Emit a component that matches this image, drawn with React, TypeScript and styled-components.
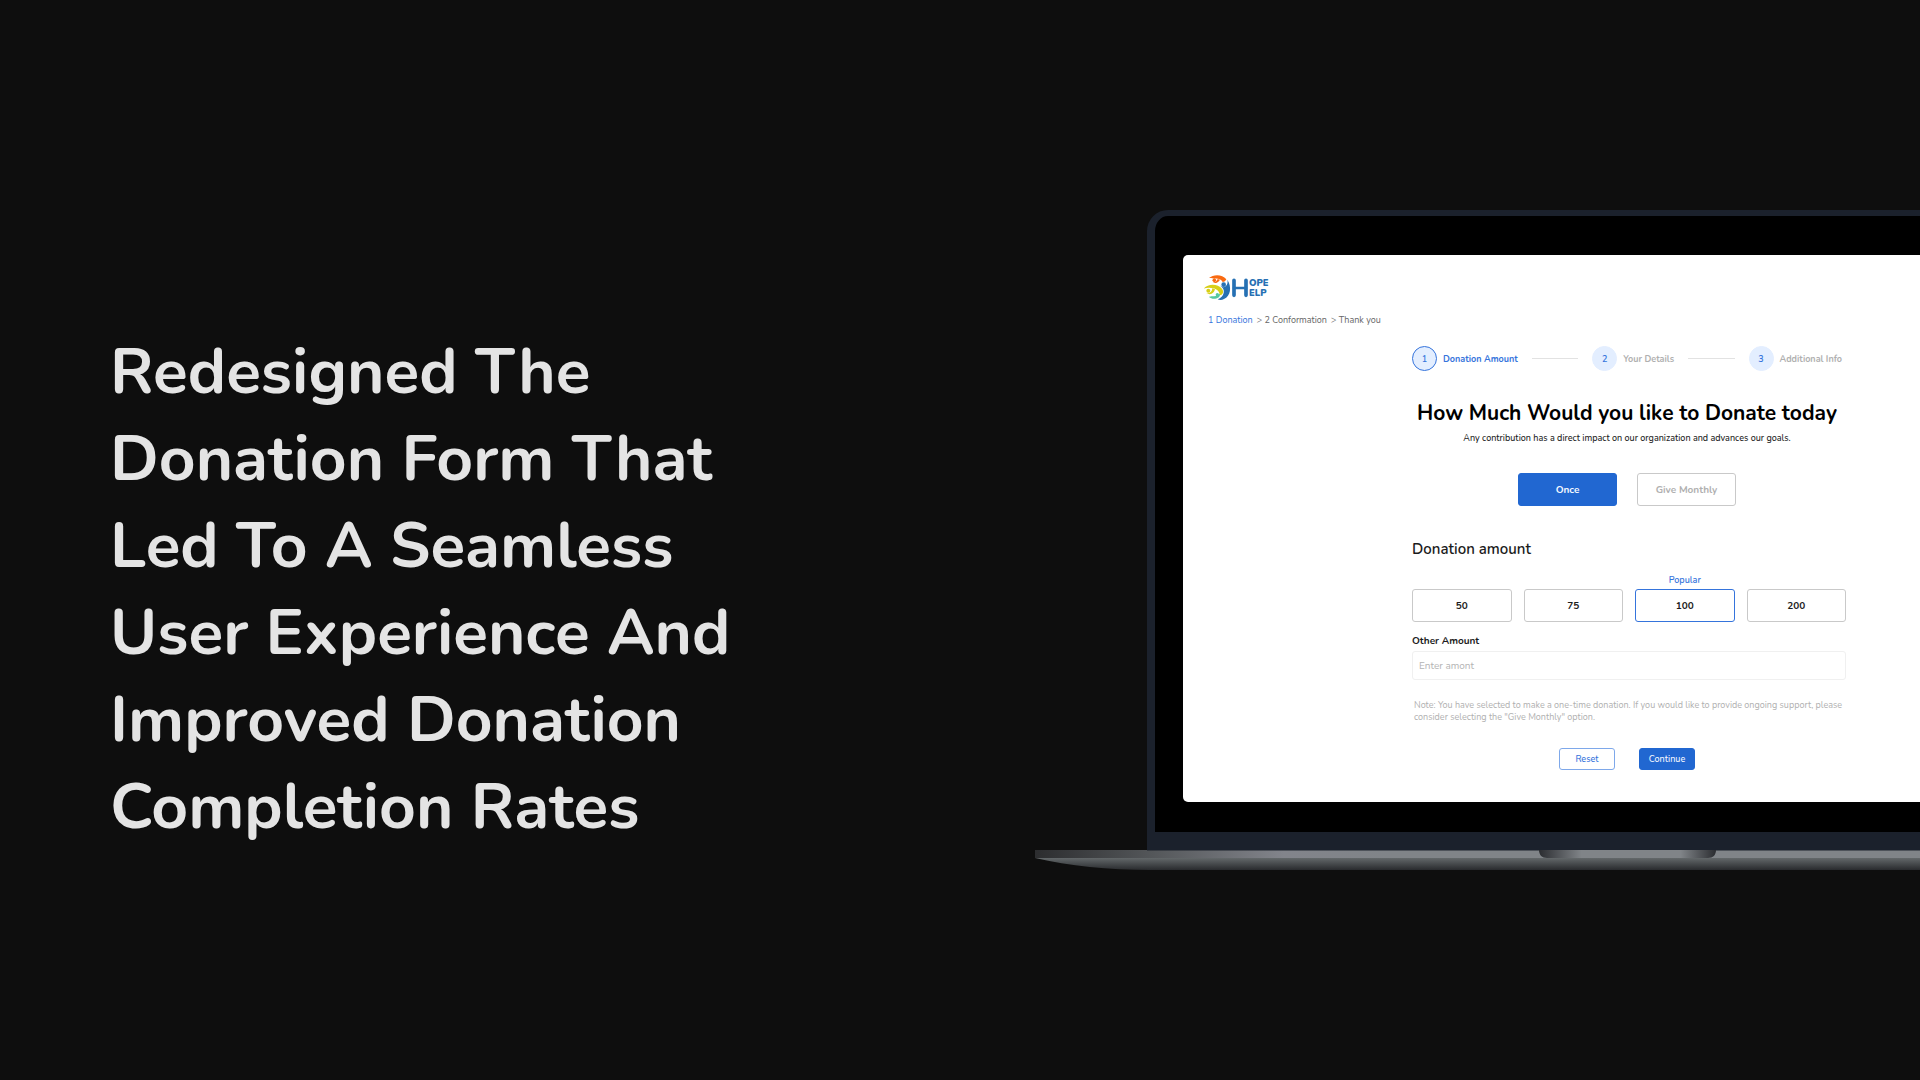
import React, { useState } from "react";
import styled, { createGlobalStyle, css } from "styled-components";

const color = {
  page: "#0e0e0e",
  headline: "#e4e4e4",
  lid: "#1b212c",
  blue: "#2167d1",
  link: "#3574dc",
  pale: "#e3eeff",
  line: "#e2e2e2",
  border: "#c9c9c9",
  muted: "#b0b0b0",
  ink: "#1c1c1c",
};

const GlobalStyle = createGlobalStyle`
  *, *::before, *::after { box-sizing: border-box; }
  body {
    margin: 0;
    background: ${color.page};
    font-family: Nunito, Lato, "Open Sans", sans-serif;
  }
  h1, h2, h3, p, ol { margin: 0; padding: 0; }
  ol { list-style: none; }
  button, input { font: inherit; }
`;

const Page = styled.main`
  min-height: 100vh;
  display: grid;
  grid-template-columns: 69fr 59fr;
  align-content: center;
  align-items: start;
  overflow: hidden;
`;

const Copy = styled.section`
  min-width: 0;
  padding: 119px 24px 0 110px;
`;

const Headline = styled.h1`
  max-width: 650px;
  color: ${color.headline};
  font-size: 64px;
  font-weight: 700;
  line-height: 87px;
`;

const Showcase = styled.section`
  min-width: 0;
`;

const Laptop = styled.div`
  width: 1184px;
  display: flex;
  flex-direction: column;
  align-items: center;
`;

const Lid = styled.div`
  width: 960px;
  padding: 39px 28px 30px;
  background: #000;
  border: solid ${color.lid};
  border-width: 6px 8px 18px;
  border-radius: 21px 21px 0 0;
`;

const Base = styled.svg`
  display: block;
  width: 100%;
  height: 20px;
`;

const Screen = styled.div`
  display: flex;
  flex-direction: column;
  padding: 20px 21px 32px;
  background: #fff;
  border-radius: 5px;
`;

const LogoMark = styled.svg`
  display: block;
  width: 66px;
  height: 26px;
`;

const Crumbs = styled.nav`
  display: flex;
  gap: 4px;
  margin-top: 13px;
  padding-left: 4px;
  color: #666;
  font-size: 9px;
  line-height: 12px;
`;

const Crumb = styled.a<{ $current?: boolean }>`
  color: ${(p) => (p.$current ? color.link : "inherit")};
  text-decoration: none;
`;

const Form = styled.form`
  width: 438px;
  margin: 20px auto 0;
  padding-left: 4px;
`;

const Centered = styled.div`
  display: flex;
  flex-direction: column;
  align-items: center;
  padding-right: 4px;
`;

const Stepper = styled.ol`
  align-self: stretch;
  display: flex;
  align-items: center;
`;

const Step = styled.li<{ $active?: boolean }>`
  display: flex;
  align-items: center;
  gap: 6px;
  color: ${(p) => (p.$active ? color.link : color.muted)};
  font-size: 9px;
  font-weight: 700;
  line-height: 12px;
  white-space: nowrap;
`;

const StepNumber = styled.span<{ $active?: boolean }>`
  width: 25px;
  height: 25px;
  display: grid;
  place-items: center;
  border: 1px solid ${(p) => (p.$active ? color.link : color.pale)};
  border-radius: 50%;
  background: ${color.pale};
  color: ${color.link};
  font-weight: 600;
`;

const StepLine = styled.li`
  flex: 1;
  height: 1px;
  margin: 0 14px;
  background: ${color.line};
`;

const Title = styled.h2`
  margin-top: 28px;
  color: #000;
  font-size: 21px;
  font-weight: 700;
  line-height: 28px;
  white-space: nowrap;
`;

const Subtitle = styled.p`
  margin-top: 5px;
  color: ${color.ink};
  font-size: 9px;
  font-weight: 500;
  line-height: 12px;
`;

const ButtonRow = styled.div<{ $gap: number; $top: number }>`
  display: flex;
  gap: ${(p) => p.$gap}px;
  margin-top: ${(p) => p.$top}px;
`;

const filled = css`
  border-color: ${color.blue};
  background: ${color.blue};
  color: #f4f8ff;
`;

const BaseButton = styled.button`
  padding: 0;
  border: 1px solid ${color.border};
  border-radius: 3px;
  background: #fff;
  line-height: 12px;
  text-align: center;
  cursor: pointer;
`;

const FrequencyButton = styled(BaseButton)<{ $selected: boolean }>`
  width: 99px;
  height: 33px;
  color: ${color.muted};
  font-size: 10px;
  font-weight: 700;
  ${(p) => p.$selected && filled}
`;

const ActionButton = styled(BaseButton)<{ $primary?: boolean }>`
  width: 56px;
  height: 22px;
  border-color: #7ea8ea;
  color: ${color.link};
  font-size: 9px;
  font-weight: 500;
  ${(p) => p.$primary && filled}
`;

const SectionTitle = styled.h3`
  margin-top: 33px;
  color: ${color.ink};
  font-size: 15px;
  font-weight: 600;
  line-height: 20px;
`;

const Amounts = styled.div`
  display: grid;
  grid-template-columns: repeat(4, 1fr);
  gap: 12px;
  align-items: end;
  margin-top: 15px;
`;

const Amount = styled.div`
  display: flex;
  flex-direction: column;
  gap: 3px;
`;

const Tag = styled.span`
  color: ${color.link};
  font-size: 9px;
  font-weight: 600;
  line-height: 12px;
  text-align: center;
`;

const AmountButton = styled(BaseButton)<{ $selected: boolean }>`
  height: 33px;
  border-color: ${(p) => (p.$selected ? color.link : color.border)};
  color: ${color.ink};
  font-size: 10px;
  font-weight: 700;
`;

const FieldLabel = styled.label`
  display: block;
  margin-top: 13px;
  color: ${color.ink};
  font-size: 10px;
  font-weight: 700;
  line-height: 12px;
`;

const TextField = styled.input`
  display: block;
  width: 100%;
  height: 29px;
  margin-top: 4px;
  padding: 0 6px;
  border: 1px solid #f0f0f0;
  border-radius: 3px;
  color: ${color.ink};
  font-size: 10px;
  line-height: 12px;

  &::placeholder {
    color: #b4b4b4;
    opacity: 1;
  }
`;

const Note = styled.p`
  margin-top: 19px;
  padding-left: 2px;
  color: ${color.muted};
  font-size: 9px;
  line-height: 12px;
`;

function Logo() {
  return (
    <LogoMark viewBox="222 225 198 78" role="img" aria-label="Hope Help">
      <path fill="#f96a11" d="M237 234C249 223 276 221 289 238C287 243 283 246 278 246C273 237 263 235 254 236C248 236 243 233 237 234Z" />
      <circle fill="#f96a11" cx="253" cy="241" r="5.5" />
      <path fill="#f96a11" d="M246 247C254 249 260 245 263 237L270 239C264 248 256 252 246 247Z" />
      <path fill="#d8cf16" d="M221 266C233 250 263 250 276 266C282 274 280 284 269 286C270 274 258 264 243 264C235 262 229 263 221 266Z" />
      <circle fill="#d8cf16" cx="235" cy="272" r="6" />
      <path fill="#d8cf16" d="M229 279C241 281 246 275 247 265L255 268C252 280 241 287 229 279Z" />
      <path fill="#56c8a0" d="M237 291C247 285 251 294 270 281C273 295 249 302 237 291Z" />
      <circle fill="#56c8a0" cx="262" cy="284" r="5" />
      <circle fill="#2670b3" cx="281" cy="254" r="7" />
      <path fill="#2670b3" d="M292 239C306 260 302 288 282 297C275 301 268 300 263 298C278 291 283 282 281 270C280 264 274 262 270 256C276 262 283 263 287 259C292 254 294 248 292 239Z" />
      <g fill="none" stroke="#2670b3" strokeWidth="11" strokeLinecap="round">
        <path d="M312 241V286M348 241V286" />
        <path strokeWidth="8" d="M312 264H348" />
      </g>
      <g fill="#2670b3" fontSize="28" fontWeight="900">
        <text x="357" y="259">OPE</text>
        <text x="357" y="287">ELP</text>
      </g>
    </LogoMark>
  );
}

function LaptopBase() {
  return (
    <Base viewBox="0 0 1184 20" preserveAspectRatio="none" aria-hidden="true">
      <defs>
        <linearGradient id="deck">
          <stop offset="0" stopColor="#2c2d2f" />
          <stop offset="0.1" stopColor="#54575a" />
          <stop offset="0.21" stopColor="#82848b" />
          <stop offset="0.3" stopColor="#808488" />
          <stop offset="0.79" stopColor="#808488" />
          <stop offset="1" stopColor="#2c2d2f" />
        </linearGradient>
        <linearGradient id="front" x2="0" y2="1">
          <stop offset="0" stopColor="#63686a" />
          <stop offset="1" stopColor="#292b2e" />
        </linearGradient>
        <linearGradient id="notch">
          <stop offset="0" stopColor="#2b2d31" />
          <stop offset="0.24" stopColor="#808488" />
          <stop offset="0.8" stopColor="#808488" />
          <stop offset="1" stopColor="#2b2d31" />
        </linearGradient>
      </defs>
      <path fill="url(#deck)" d="M0 0H1184V8H0Z" />
      <path fill={color.lid} fillOpacity="0.5" d="M112 0H1072V1H112Z" />
      <path fill="url(#front)" d="M0 8H1184C1150 16 1110 20 1070 20H114C74 20 34 16 0 8Z" />
      <path fill="url(#notch)" d="M504 0H681C681 5 678 8 673 8H512C507 8 504 5 504 0Z" />
    </Base>
  );
}

const steps = ["Donation Amount", "Your Details", "Additional Info"];
const frequencies = ["Once", "Give Monthly"];
const amounts = [50, 75, 100, 200];

function DonationForm() {
  const [frequency, setFrequency] = useState("Once");
  const [amount, setAmount] = useState(100);

  return (
    <Form onSubmit={(e) => e.preventDefault()}>
      <Centered>
        <Stepper>
          {steps.map((label, i) => (
            <React.Fragment key={label}>
              {i > 0 && <StepLine aria-hidden="true" />}
              <Step $active={i === 0}>
                <StepNumber $active={i === 0}>{i + 1}</StepNumber>
                {label}
              </Step>
            </React.Fragment>
          ))}
        </Stepper>
        <Title>How Much Would you like to Donate today</Title>
        <Subtitle>Any contribution has a direct impact on our organization and advances our goals.</Subtitle>
        <ButtonRow $gap={20} $top={29}>
          {frequencies.map((name) => (
            <FrequencyButton
              key={name}
              type="button"
              $selected={frequency === name}
              aria-pressed={frequency === name}
              onClick={() => setFrequency(name)}
            >
              {name}
            </FrequencyButton>
          ))}
        </ButtonRow>
      </Centered>

      <SectionTitle>Donation amount</SectionTitle>
      <Amounts>
        {amounts.map((value) => (
          <Amount key={value}>
            {value === 100 && <Tag>Popular</Tag>}
            <AmountButton
              type="button"
              $selected={amount === value}
              aria-pressed={amount === value}
              onClick={() => setAmount(value)}
            >
              {value}
            </AmountButton>
          </Amount>
        ))}
      </Amounts>
      <FieldLabel htmlFor="other-amount">Other Amount</FieldLabel>
      <TextField id="other-amount" type="text" inputMode="decimal" placeholder="Enter amont" />
      <Note>
        Note: You have selected to make a one-time donation. If you would like to provide ongoing support, please
        consider selecting the "Give Monthly" option.
      </Note>

      <Centered>
        <ButtonRow $gap={24} $top={25}>
          <ActionButton type="reset">Reset</ActionButton>
          <ActionButton type="submit" $primary>
            Continue
          </ActionButton>
        </ButtonRow>
      </Centered>
    </Form>
  );
}

export default function App() {
  return (
    <>
      <GlobalStyle />
      <Page>
        <Copy>
          <Headline>Redesigned The Donation Form That Led To A Seamless User Experience And Improved Donation Completion Rates</Headline>
        </Copy>
        <Showcase>
          <Laptop>
            <Lid>
              <Screen>
                <Logo />
                <Crumbs aria-label="Progress">
                  <Crumb href="#donation" $current>
                    1 Donation
                  </Crumb>
                  <Crumb href="#conformation">&gt; 2 Conformation</Crumb>
                  <Crumb href="#thank-you">&gt; Thank you</Crumb>
                </Crumbs>
                <DonationForm />
              </Screen>
            </Lid>
            <LaptopBase />
          </Laptop>
        </Showcase>
      </Page>
    </>
  );
}
